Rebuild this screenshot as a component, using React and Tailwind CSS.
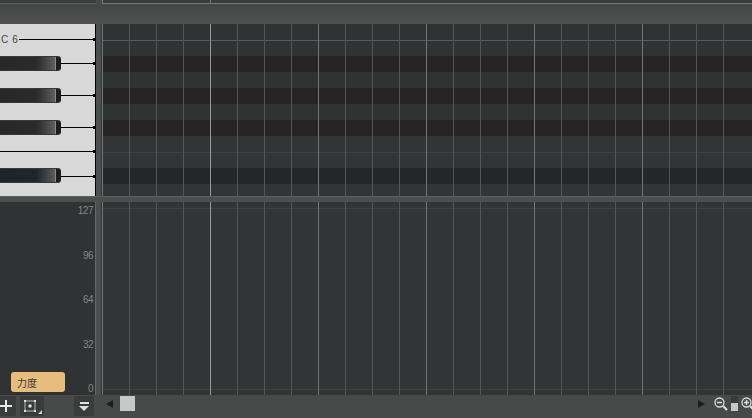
import React from 'react';

const rows = [
  ['h-[17px]', 'bg-[#303334] border-b border-[#5a5c5c]'],
  ['h-[15px]', 'bg-[#303334]'],
  ['h-4', 'bg-[#262425]'],
  ['h-4', 'bg-[#303334]'],
  ['h-4', 'bg-[#262425]'],
  ['h-4', 'bg-[#303334]'],
  ['h-4', 'bg-[#262425]'],
  ['h-[17px]', 'bg-[#323435] border-b border-[#3f4142]'],
  ['h-[15px]', 'bg-[#323435]'],
  ['h-4', 'bg-[#242628]'],
  ['h-3', 'bg-[#323435]'],
];

const beats = Array.from({ length: 24 }, (_, i) => i);

const lineClass = (i) => {
  if (i === 0) return 'border-[#777979]';
  if (i === 4) return 'border-[#989a9a]';
  if (i % 4 === 0) return 'border-[#747676]';
  return 'border-[#535556]';
};

const BeatLines = () => (
  <div className="absolute inset-0 flex">
    {beats.map((i) => (
      <div key={i} className={`w-[27px] shrink-0 border-l ${lineClass(i)}`} />
    ))}
  </div>
);

const KeyWire = ({ low }) => (
  <div className={`flex-1 flex items-center ${low ? 'pt-[2px]' : ''}`}>
    <div className="flex-1 h-[1px] bg-black" />
    <div className="w-[2px] h-[3px] bg-black" />
  </div>
);

const BlackKey = ({ blue }) => (
  <div className="flex items-center h-[15px]">
    <div className={`w-[61px] h-[15px] rounded-r-[3px] border-y border-[#3a3a3a] bg-gradient-to-r via-60% to-[#707070] relative ${blue ? 'from-[#1e2428] via-[#20262a]' : 'from-[#282828] via-[#2b2b2b]'}`}>
      <div className="absolute right-[5px] top-0 bottom-0 w-[1px] bg-[#8a8a8a]" />
      <div className="absolute right-0 top-0 bottom-0 w-[5px] bg-[#1c1c1c] rounded-r-[3px]" />
    </div>
    <KeyWire low={blue} />
  </div>
);

const Keys = () => (
  <div className="w-[96px] h-[172px] bg-[#d8d8d8] border-r border-black flex flex-col">
    <div className="h-[8px]" />
    <div className="flex items-center h-[15px]">
      <span className="w-[19px] pl-[1px] whitespace-nowrap text-[10px] tracking-[0.6px] leading-none text-[#444] font-['Liberation_Sans',sans-serif]">C 6</span>
      <KeyWire />
    </div>
    <div className="h-[9px]" />
    <BlackKey />
    <div className="h-[17px]" />
    <BlackKey />
    <div className="h-[17px]" />
    <BlackKey />
    <div className="h-[14px]" />
    <div className="flex items-center h-[5px]">
      <KeyWire />
    </div>
    <div className="h-[14px]" />
    <BlackKey blue />
  </div>
);

const Scale = ({ label }) => (
  <span className="text-[10px] leading-none tracking-[-0.5px] text-[#858787] text-right">{label}</span>
);

const App = () => {
  return (
    <div className="w-[752px] h-[418px] overflow-hidden bg-[#484a4a] font-['Liberation_Sans',sans-serif] flex flex-col">
      {/* top strip */}
      <div className="h-[4px] flex shrink-0">
        <div className="w-[96px] bg-[#3a3c3c] border-b border-[#5a5c5c]" />
        <div className="w-[6px]" />
        <div className="flex-1 bg-[#3a3c3c] border-l border-b border-[#777979]">
          <div className="ml-[107px] w-[1px] h-full bg-[#5f8080]" />
        </div>
      </div>
      <div className="h-[20px] shrink-0 bg-gradient-to-b from-[#444646] to-[#505252]" />

      {/* piano roll */}
      <div className="h-[172px] flex shrink-0">
        <Keys />
        <div className="w-[6px] bg-[#4d4f4f] border-r border-[#333]" />
        <div className="flex-1 relative overflow-hidden flex flex-col">
          {rows.map(([h, c], i) => (
            <div key={i} className={`${h} ${c}`} />
          ))}
          <BeatLines />
        </div>
      </div>

      <div className="h-[6px] shrink-0 bg-[#4d4f4f] border-t border-[#5e6060]" />

      {/* velocity lane */}
      <div className="h-[193px] flex shrink-0">
        <div className="w-[95px] bg-[#303233] relative flex flex-col justify-between items-end pr-[2px] pt-[4px] pb-[1px]">
          <Scale label="127" />
          <Scale label="96" />
          <Scale label="64" />
          <Scale label="32" />
          <Scale label="0" />
          <div className="absolute left-[11px] bottom-[3px] w-[54px] h-[20px] rounded-[3px] bg-[#e6bd7c] flex items-center pl-[6px] text-[10px] text-[#3a3a3a] font-['Noto_Sans_CJK_SC',sans-serif]">
            力度
          </div>
        </div>
        <div className="w-[7px] bg-[#4d4f4f] border-l border-[#666868] border-r border-r-[#333]" />
        <div className="flex-1 bg-[#323435] relative overflow-hidden flex flex-col">
          <div className="h-[7px] border-b border-[#3f4142]" />
          <div className="flex-1" />
          <div className="h-[6px] border-t border-[#3f4142]" />
          <BeatLines />
        </div>
      </div>

      {/* bottom toolbar */}
      <div className="flex-1 flex items-start pt-[1px]">
        <button className="w-[16px] h-[20px] bg-[#3a3c3c] rounded-r-[2px] flex items-center justify-start">
          <svg width="13" height="13" viewBox="0 0 13 13" fill="#e8e8e8">
            <rect x="0" y="5" width="12" height="2" />
            <rect x="5" y="0" width="2" height="12" />
          </svg>
        </button>
        <button className="ml-[4px] w-[24px] h-[20px] bg-[#3a3c3c] rounded-[2px] flex items-center pl-[3px] relative">
          <svg width="14" height="14" viewBox="0 0 14 14">
            <rect x="2" y="2" width="10" height="10" fill="none" stroke="#b9b9b9" strokeWidth="1" />
            <circle cx="7" cy="7" r="1.8" fill="#e4dfc8" />
            <rect x="1" y="1" width="2" height="2" fill="#e0e0e0" />
            <rect x="11" y="1" width="2" height="2" fill="#e0e0e0" />
            <rect x="1" y="11" width="2" height="2" fill="#e0e0e0" />
            <rect x="11" y="11" width="2" height="2" fill="#e0e0e0" />
          </svg>
          <span className="absolute right-[2px] bottom-[2px] w-0 h-0 border-l-[4px] border-l-transparent border-b-[4px] border-b-[#d0d0d0]" />
        </button>
        <button className="ml-[30px] w-[20px] h-[20px] bg-[#3a3c3c] rounded-[2px] flex flex-col items-center justify-center gap-[2px]">
          <span className="w-[9px] h-[2px] bg-[#e0e0e0]" />
          <span className="w-0 h-0 border-x-[5px] border-x-transparent border-t-[5px] border-t-[#e0e0e0]" />
        </button>

        {/* scrollbar */}
        <div className="flex-1 h-[15px] flex items-center">
          <span className="ml-[12px] w-0 h-0 border-y-[4px] border-y-transparent border-r-[7px] border-r-[#1d1d1d]" />
          <div className="ml-[7px] w-[15px] h-[15px] bg-[#c8c8c8]" />
          <div className="flex-1" />
          <span className="w-0 h-0 border-y-[4px] border-y-transparent border-l-[7px] border-l-[#1d1d1d]" />
          <svg className="ml-[9px] shrink-0" width="14" height="14" viewBox="0 0 14 14" fill="none" stroke="#dcdcdc">
            <circle cx="5.5" cy="5.5" r="4.5" strokeWidth="1.3" />
            <path d="M3 5.5h5" strokeWidth="1.5" />
            <path d="M9 9l4 4" strokeWidth="2.2" />
          </svg>
          <div className="ml-[3px] w-[7px] h-[15px] shrink-0 bg-[#3a3c3c] flex flex-col justify-end">
            <div className="h-[8px] bg-[#c8c8c8]" />
          </div>
          <svg className="ml-[3px] mr-[-3px] shrink-0" width="14" height="14" viewBox="0 0 14 14" fill="none" stroke="#dcdcdc">
            <circle cx="5.5" cy="5.5" r="4.5" strokeWidth="1.3" />
            <path d="M3 5.5h5M5.5 3v5" strokeWidth="1.5" />
            <path d="M9 9l4 4" strokeWidth="2.2" />
          </svg>
        </div>
      </div>
    </div>
  );
};

export default App;
